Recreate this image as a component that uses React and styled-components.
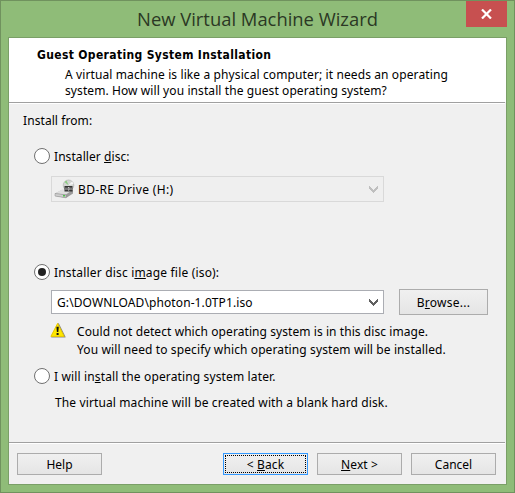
import React from 'react';
import styled, { createGlobalStyle, css } from 'styled-components';

const GlobalStyle = createGlobalStyle`
  * { box-sizing: border-box; }
  body { margin: 0; }
`;

const Window = styled.div`
  width: 515px;
  height: 493px;
  display: flex;
  flex-direction: column;
  padding: 0 7px 7px;
  border: 1px solid #70925e;
  background: #8fbc78;
  color: #000;
  font: 12px/16px 'Noto Sans', 'Open Sans', sans-serif;
  white-space: nowrap;
`;

const TitleBar = styled.header`
  height: 36px;
  flex: none;
  display: grid;
  grid-template-columns: 41px 1fr 41px;
`;

const Title = styled.h1`
  grid-column: 2;
  margin: 0;
  padding-top: 6px;
  text-align: center;
  color: #2b3824;
  font: 400 18.4px/24px 'Open Sans', 'Noto Sans', sans-serif;
`;

const CloseButton = styled.button`
  width: 41px;
  height: 26px;
  padding: 0;
  border: 0;
  display: flex;
  align-items: center;
  justify-content: center;
  background: #c75050;
`;

const Client = styled.main`
  flex: 1;
  display: flex;
  flex-direction: column;
  border: 1px solid #7a9f67;
  background: #f0f0f0;
`;

const Banner = styled.section`
  height: 64px;
  flex: none;
  padding: 8px 0 0 28px;
  background: #fff;
`;

const Rule = styled.div`
  height: 2px;
  flex: none;
  margin-right: 1px;
  background: linear-gradient(#a0a0a0 50%, #fff 50%);
`;

const Text = styled.div`
  height: ${(p) => p.$h || 16}px;
  line-height: ${(p) => (p.$h || 16) + 2}px;
  letter-spacing: ${(p) => p.$ls || 0}px;
  ${(p) => p.$indent && css`padding-left: ${p.$indent}px;`}
`;

const Heading = styled(Text)`
  font-family: 'DejaVu Sans Condensed', 'DejaVu Sans', sans-serif;
  font-stretch: condensed;
  font-weight: 700;
  margin-bottom: 4px;
`;

const Body = styled.section`
  flex: 1;
  display: flex;
  flex-direction: column;
  padding: 8px 17px 0 14px;
`;

const Option = styled.label`
  display: flex;
  align-items: center;
  height: 16px;
  gap: 4px;
  margin: ${(p) => p.$top}px 0 0 11px;
`;

const Radio = styled.span`
  width: 16px;
  height: 16px;
  flex: none;
  display: grid;
  place-items: center;
  border: 1px solid #707070;
  border-radius: 50%;
  background: #fff;
  &::after {
    content: '';
    width: 8px;
    height: 8px;
    border-radius: 50%;
    background: ${(p) => (p.$checked ? '#222' : 'transparent')};
  }
`;

const Row = styled.div`
  display: flex;
  align-items: center;
  gap: 15px;
  margin: ${(p) => p.$top}px 0 0 28px;
`;

const Combo = styled.div`
  width: 333px;
  height: ${(p) => (p.$disabled ? 26 : 24)}px;
  display: flex;
  align-items: center;
  padding: ${(p) => (p.$disabled ? '0 5px 0 2px' : '0 5px')};
  border: 1px solid ${(p) => (p.$disabled ? '#d9d9d9' : '#abadb3')};
  background: ${(p) => (p.$disabled ? '#efefef' : '#fff')};
  svg:last-child { margin-left: auto; }
`;

const Button = styled.button`
  width: ${(p) => p.$w || 85}px;
  height: ${(p) => p.$h || 22}px;
  padding: 2px 0 0;
  border: 1px solid ${(p) => (p.$default ? '#3399ff' : '#acacac')};
  background: linear-gradient(#f0f0f0, #e5e5e5);
  color: #000;
  font: inherit;
  line-height: 16px;
  letter-spacing: ${(p) => p.$ls || 0}px;
  ${(p) => p.$default && css`
    outline: 1px dotted #000;
    outline-offset: -3px;
  `}
`;

const Warning = styled.div`
  display: flex;
  gap: 11px;
  margin: 7px 0 0 27px;
`;

const Footer = styled.footer`
  height: 40px;
  flex: none;
  display: flex;
  padding: 9px 10px 0 8px;
  button + button { margin-left: 9px; }
  button:nth-child(2) { margin-left: auto; }
`;

const Key = styled.span`
  text-decoration: underline;
  text-decoration-thickness: 1px;
  text-underline-offset: 1px;
  text-decoration-skip-ink: none;
`;

const Chevron = ({ color }) => (
  <svg width="9" height="7" viewBox="0 0 9 7" shapeRendering="crispEdges">
    <path d="M0 0h1v1h1v1h1v1h1v1h1v-1h1v-1h1v-1h1v-1h1v3h-1v1h-1v1h-1v1h-1v1h-1v-1h-1v-1h-1v-1h-1v-1h-1z" fill={color} />
  </svg>
);

const DriveIcon = () => (
  <svg width="21" height="20" viewBox="0 0 21 20">
    <circle cx="14.5" cy="6.3" r="5.3" fill="#d2d5d2" stroke="#aaa" strokeWidth=".6" />
    <path d="M14.5 6.3 10.5 3A5.3 5.3 0 0 1 12.5 1.4z" fill="#8acb80" />
    <path d="M14.5 6.3 18 2.4A5.3 5.3 0 0 1 19.6 5z" fill="#f5f5f5" />
    <path d="M1 14.5 8 11h11v3.5L12 19 1 17z" fill="#9a9a9a" />
    <path d="M1 14.5 8 10.5h11l-7 5z" fill="#dedede" />
    <path d="M1 14.5l11 1.3v3L1 17z" fill="#cfcfcf" stroke="#8c8c8c" strokeWidth=".5" />
    <rect x="10.5" y="7" width="8" height="5.5" fill="#333" />
    <path d="M12 8.5v2.6M14 8.5v2.6h1.2v-2.6zM17 8.5v2.6" stroke="#ddd" strokeWidth=".8" fill="none" />
    <rect x="9" y="16" width="2" height="1.5" fill="#4fc04a" />
  </svg>
);

const WarningIcon = () => (
  <svg width="16" height="16" viewBox="0 0 16 16">
    <path d="M8.4 1.8 15 15H1.8z" fill="#888" stroke="#888" strokeWidth="1.2" strokeLinejoin="round" />
    <path d="M7.6 1.4 14.2 14.4H.9z" fill="#ffe800" stroke="#e8c800" strokeWidth="1" strokeLinejoin="round" />
    <path d="M6.4 4.8h2.4l-.5 5.2H6.9z" fill="#111" />
    <rect x="6.6" y="11" width="2" height="2" fill="#111" />
  </svg>
);

export default function App() {
  return (
    <>
      <GlobalStyle />
      <Window>
        <TitleBar>
          <Title>New Virtual Machine Wizard</Title>
          <CloseButton aria-label="Close">
            <svg width="11" height="10" viewBox="0 0 11 10">
              <path d="M1 .5 10 9.5M10 .5 1 9.5" stroke="#fff" strokeWidth="2.2" />
            </svg>
          </CloseButton>
        </TitleBar>
        <Client>
          <Banner>
            <Heading $ls={0.35}>Guest Operating System Installation</Heading>
            <Text $indent={28} $ls={0.11}>A virtual machine is like a physical computer; it needs an operating</Text>
            <Text $indent={28} $ls={0.09}>system. How will you install the guest operating system?</Text>
          </Banner>
          <Rule />
          <Body>
            <Text $ls={0.08}>Install from:</Text>
            <Option $top={20}>
              <Radio />
              <Text $ls={0.07}>Installer <Key>d</Key>isc:</Text>
            </Option>
            <Row $top={12}>
              <Combo $disabled>
                <DriveIcon />
                <Text $indent={3} $ls={0.36}>BD-RE Drive (H:)</Text>
                <Chevron color="#bfbfbf" />
              </Combo>
            </Row>
            <Option $top={62}>
              <Radio $checked />
              <Text $ls={0.18}>Installer disc i<Key>m</Key>age file (iso):</Text>
            </Option>
            <Row $top={9}>
              <Combo>
                <Text $ls={0.1}>G:\DOWNLOAD\photon-1.0TP1.iso</Text>
                <Chevron color="#606060" />
              </Combo>
              <Button $w={89} $h={26} $ls={0.25}>B<Key>r</Key>owse...</Button>
            </Row>
            <Warning>
              <WarningIcon />
              <div>
                <Text $h={18} $ls={0.07}>Could not detect which operating system is in this disc image.</Text>
                <Text $h={18} $ls={0.11}>You will need to specify which operating system will be installed.</Text>
              </div>
            </Warning>
            <Option $top={10}>
              <Radio />
              <Text $ls={0.14}>I will in<Key>s</Key>tall the operating system later.</Text>
            </Option>
            <Text $h={36} $indent={32} $ls={0.12}>The virtual machine will be created with a blank hard disk.</Text>
          </Body>
          <Rule />
          <Footer>
            <Button>Help</Button>
            <Button $default $ls={0.1}>&lt; <Key>B</Key>ack</Button>
            <Button $ls={0.1}><Key>N</Key>ext &gt;</Button>
            <Button>Cancel</Button>
          </Footer>
        </Client>
      </Window>
    </>
  );
}
